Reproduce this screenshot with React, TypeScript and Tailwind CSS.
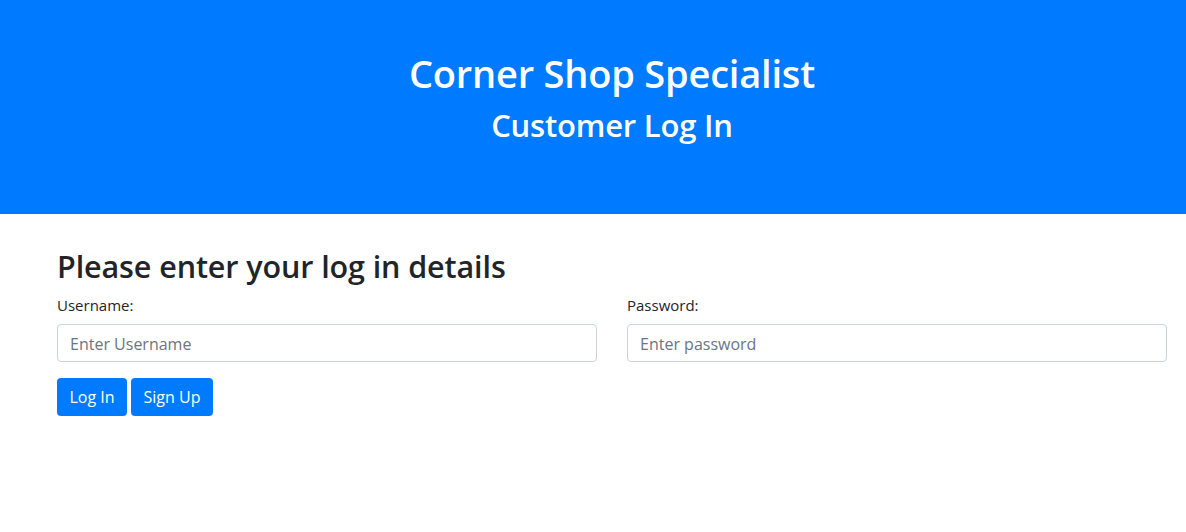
export default function App() {
  return (
    <div className="min-h-[532px] bg-white text-[#212529] font-['Open_Sans',sans-serif]">
      <header className="h-[214px] bg-[#007bff] pl-[38px] pt-12 text-center text-white">
        <h1 className="mb-2 text-[38px] font-semibold leading-[50px] tracking-[-0.2px]">Corner Shop Specialist</h1>
        <h2 className="text-[31px] font-semibold leading-[38px] tracking-[-0.2px]">Customer Log In</h2>
      </header>

      <main className="pl-[57px] pr-[19px] pt-8">
        <h2 className="mb-2 text-[30.5px] font-semibold leading-[40px] tracking-[-0.1px]">Please enter your log in details</h2>
        <div className="grid grid-cols-2 gap-[30px]">
          <div>
            <label className="mb-2 block text-[15px] leading-[22px]">Username:</label>
            <input
              type="text"
              placeholder="Enter Username"
              className="block h-[38px] w-full rounded border border-[#ced4da] px-3 pt-[2px] text-base text-[#495057] placeholder:text-[#6c757d]"
            />
          </div>
          <div>
            <label className="mb-2 block text-[15px] leading-[22px]">Password:</label>
            <input
              type="password"
              placeholder="Enter password"
              className="block h-[38px] w-full rounded border border-[#ced4da] px-3 pt-[2px] text-base text-[#495057] placeholder:text-[#6c757d]"
            />
          </div>
        </div>
        <div className="mt-4 flex gap-1">
          <button className="h-[38px] w-[70px] rounded bg-[#007bff] text-base text-white">Log In</button>
          <button className="h-[38px] w-[82px] rounded bg-[#007bff] text-base text-white">Sign Up</button>
        </div>
      </main>
    </div>
  );
}
